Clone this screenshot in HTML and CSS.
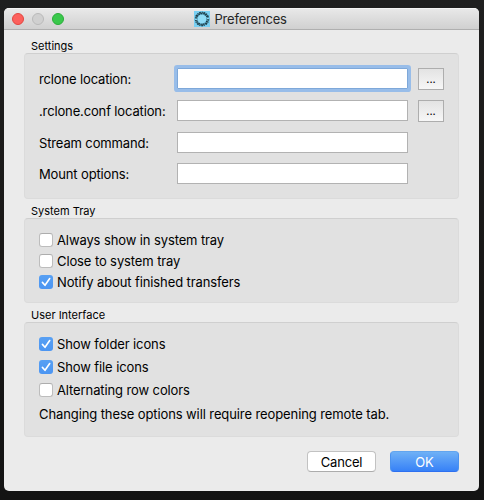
FILE: index.html
```html
<!DOCTYPE html>
<html lang="en">
<head>
<meta charset="utf-8">
<title>Preferences</title>
<link rel="stylesheet" href="styles.css">
</head>
<body>
<main class="window">
  <header class="titlebar">
    <div class="lights"><i class="light close"></i><i class="light minimize"></i><i class="light maximize"></i></div>
    <div class="title">
      <svg class="app-icon" viewBox="0 0 16 16">
        <rect width="16" height="16" fill="#79d0f3"/>
        <circle cx="8" cy="8" r="4.3" fill="#8fdcf6"/>
        <circle cx="8" cy="8" r="6" fill="none" stroke="#5a9db5" stroke-width="2.4"/>
        <circle cx="8" cy="8" r="6.5" fill="none" stroke="#1c3b46" stroke-width="1.5" stroke-dasharray="1.6 1.1 .9 .9"/>
        <circle cx="8" cy="8" r="5.3" fill="none" stroke="#1c3b46" stroke-width="1.3" stroke-dasharray="1 .9 1.5 .8"/>
        <path d="M.8 8.4h2.6M12.7 7.6h2.6" stroke="#83d4f0" stroke-width="1.4"/>
      </svg>
      <h1>Preferences</h1>
    </div>
  </header>

  <section class="group settings">
    <h2>Settings</h2>
    <div class="panel">
      <div class="field"><label for="rclone">rclone location:</label><input id="rclone" class="focused" type="text"><button class="browse">...</button></div>
      <div class="field"><label for="conf">.rclone.conf location:</label><input id="conf" type="text"><button class="browse">...</button></div>
      <div class="field"><label for="stream">Stream command:</label><input id="stream" type="text"></div>
      <div class="field"><label for="mount">Mount options:</label><input id="mount" type="text"></div>
    </div>
  </section>

  <section class="group tray">
    <h2>System Tray</h2>
    <div class="panel">
      <div class="option"><i class="box"></i><span>Always show in system tray</span></div>
      <div class="option"><i class="box"></i><span>Close to system tray</span></div>
      <div class="option"><i class="box checked"><svg viewBox="0 0 14 14"><path d="M3.4 7.4 6 10.3 10.7 3.5"/></svg></i><span>Notify about finished transfers</span></div>
    </div>
  </section>

  <section class="group interface">
    <h2>User Interface</h2>
    <div class="panel">
      <div class="option"><i class="box checked"><svg viewBox="0 0 14 14"><path d="M3.4 7.4 6 10.3 10.7 3.5"/></svg></i><span>Show folder icons</span></div>
      <div class="option"><i class="box checked"><svg viewBox="0 0 14 14"><path d="M3.4 7.4 6 10.3 10.7 3.5"/></svg></i><span>Show file icons</span></div>
      <div class="option"><i class="box"></i><span>Alternating row colors</span></div>
      <p>Changing these options will require reopening remote tab.</p>
    </div>
  </section>

  <footer class="actions">
    <button class="action cancel">Cancel</button>
    <button class="action ok">OK</button>
  </footer>
</main>
</body>
</html>
```
FILE: styles.css
```css
* { box-sizing: border-box; }

body {
  margin: 0;
  width: 484px;
  height: 500px;
  padding: 8px 5px 9px 4px;
  overflow: hidden;
  background: linear-gradient(#1f1f1f, #191817 50%, #131313);
  font: 13px/16px Inter, "Liberation Sans", sans-serif;
  color: #000;
}

h1, h2, p { margin: 0; font-weight: 400; }

button, input { font: inherit; margin: 0; padding: 0; }

.window {
  display: flex;
  flex-direction: column;
  width: 475px;
  height: 483px;
  border-radius: 5px;
  background: #ebebeb;
  overflow: hidden;
}

.titlebar {
  display: flex;
  align-items: flex-start;
  height: 22px;
  padding: 0 8px;
  background: linear-gradient(#e8e8e8, #d0d0d0);
  border-top: 1px solid #f4f4f4;
  border-bottom: 1px solid #afafaf;
}

.lights { display: flex; gap: 8px; width: 182px; padding-top: 4px; }
.light { width: 12px; height: 12px; border-radius: 50%; border: 1px solid; }
.close { background: #fc605c; border-color: #e1463f; }
.minimize { background: #d0d0d0; border-color: #b9b9b9; }
.maximize { background: #3ac84c; border-color: #2bac3a; }

.title { display: flex; gap: 4.5px; padding-top: 2px; }
.app-icon { width: 16px; height: 16px; }
.title h1 { font-size: 13px; line-height: 17px; letter-spacing: -0.2px; color: #262626; }

.group { padding: 0 20px; }
.group h2 { padding-left: 7px; height: 14px; font-size: 11px; line-height: 14px; }

.panel {
  padding: 14px;
  border: 1px solid #dbdbdb;
  border-top-color: #cfcfcf;
  border-radius: 4px;
  background: #e1e1e1;
}

.settings { padding-top: 9px; }
.settings .panel { height: 146px; }
.tray { padding-top: 5px; }
.tray .panel { height: 85px; }
.interface { padding-top: 5px; }
.interface .panel { height: 115px; }

.field { display: flex; align-items: flex-start; height: 32px; }
.field:nth-child(3) { height: 31px; }
.field label { width: 138px; padding-top: 3px; letter-spacing: -0.14px; white-space: nowrap; }
.field input {
  width: 231px;
  height: 21px;
  border: 1px solid #b2b2b2;
  border-radius: 0;
  background: #fff;
  outline: none;
}
.field .focused { border-color: #7ea8d9; box-shadow: 0 0 0 3px #98bde9; border-radius: 1px; }

.browse {
  width: 26px;
  height: 22px;
  margin-left: 10px;
  border: 1px solid #adadad;
  background: linear-gradient(#e3e3e3, #f7f7f7);
  font-size: 11px;
  line-height: 20px;
  color: #000;
}

.option { display: flex; gap: 4px; height: 21px; }
.option span { line-height: 15px; letter-spacing: -0.11px; white-space: nowrap; }
.interface .option { height: 23px; }

.box {
  width: 14px;
  height: 14px;
  border: 1px solid #bdbdbd;
  border-top-color: #adadad;
  border-radius: 3px;
  background: #fff;
}
.box.checked { border: 0; background: linear-gradient(#58a0f3, #4b95f2); }
.box svg { display: block; width: 14px; height: 14px; fill: none; stroke: #fff; stroke-width: 1.6; stroke-linecap: round; stroke-linejoin: round; }

.interface p { line-height: 16px; letter-spacing: -0.1px; white-space: nowrap; }

.actions { display: flex; justify-content: flex-end; gap: 14px; padding: 14px 20px 0; }
.action { width: 69px; height: 21px; border-radius: 4px; line-height: 18px; letter-spacing: -0.2px; }
.cancel { border: 1px solid #c2c2c2; border-bottom-color: #acacac; background: #fff; color: #000; }
.ok { border: 1px solid #4b92ee; border-top-color: #62a5ef; border-bottom-color: #2e70f0; background: linear-gradient(#6fb1f6, #3781f7); color: #fff; }
```
